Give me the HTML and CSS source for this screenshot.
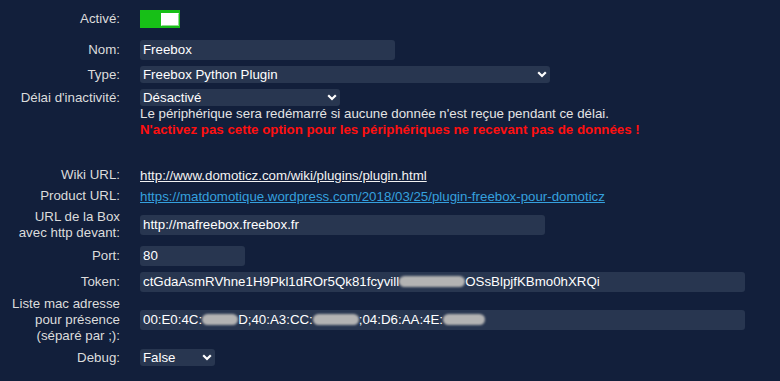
FILE: index.html
```html
<!DOCTYPE html>
<html lang="fr">
<head>
    <meta charset="UTF-8">
    <title>Hardware - Freebox</title>
    <link rel="stylesheet" href="styles.css">
</head>
<body>

<form class="plugin-form">
    <div class="row row-enabled">
        <label>Activé:</label>
        <div><span class="toggle"><span class="knob"></span></span></div>
    </div>
    <div class="row row-wide">
        <label for="name">Nom:</label>
        <div><input type="text" id="name" class="w-name" value="Freebox"></div>
    </div>
    <div class="row row-wide">
        <label for="type">Type:</label>
        <div class="select w-type">
            <select id="type"><option>Freebox Python Plugin</option></select>
            <svg class="chevron" viewBox="0 0 10 7"><path d="M1.2 1.2 5 5 8.8 1.2" fill="none" stroke="#fff" stroke-width="2.2"/></svg>
        </div>
    </div>
    <div class="row row-top">
        <label for="timeout">Délai d'inactivité:</label>
        <div>
            <div class="select w-timeout">
                <select id="timeout"><option>Désactivé</option></select>
                <svg class="chevron" viewBox="0 0 10 7"><path d="M1.2 1.2 5 5 8.8 1.2" fill="none" stroke="#fff" stroke-width="2.2"/></svg>
            </div>
            <p class="help">Le périphérique sera redémarré si aucune donnée n'est reçue pendant ce délai.</p>
            <p class="warning">N'activez pas cette option pour les périphériques ne recevant pas de données !</p>
        </div>
    </div>

    <div class="row row-wiki">
        <label>Wiki URL:</label>
        <div><a class="link-wiki" href="#">http://www.domoticz.com/wiki/plugins/plugin.html</a></div>
    </div>
    <div class="row">
        <label>Product URL:</label>
        <div><a class="link-product" href="#">https://matdomotique.wordpress.com/2018/03/25/plugin-freebox-pour-domoticz</a></div>
    </div>
    <div class="row">
        <label for="address">URL de la Box<br>avec http devant:</label>
        <div><input type="text" id="address" class="w-address" value="http://mafreebox.freebox.fr"></div>
    </div>
    <div class="row row-wide">
        <label for="port">Port:</label>
        <div><input type="text" id="port" class="w-port" value="80"></div>
    </div>
    <div class="row row-tight">
        <label>Token:</label>
        <div class="field w-long">ctGdaAsmRVhne1H9Pkl1dROr5Qk81fcyvill<span class="blur b-token"></span>OSsBlpjfKBmo0hXRQi</div>
    </div>
    <div class="row">
        <label>Liste mac adresse<br>pour présence<br>(séparé par ;):</label>
        <div class="field w-long">00:E0:4C:<span class="blur b-mac1"></span>D;40:A3:CC:<span class="blur b-mac2"></span>;04:D6:AA:4E:<span class="blur b-mac3"></span></div>
    </div>
    <div class="row">
        <label for="debug">Debug:</label>
        <div class="select w-debug">
            <select id="debug"><option>False</option></select>
            <svg class="chevron" viewBox="0 0 10 7"><path d="M1.2 1.2 5 5 8.8 1.2" fill="none" stroke="#fff" stroke-width="2.2"/></svg>
        </div>
    </div>
</form>

</body>
</html>
```

FILE: styles.css
```css
body {
    margin: 0;
    background-color: #121f3b;
    font-family: 'Liberation Sans', Arial, sans-serif;
    font-size: 13.3px;
    color: #dcdcdc;
}
.plugin-form {
    padding-top: 10px;
}
.row {
    display: grid;
    grid-template-columns: 120px 1fr;
    column-gap: 20px;
    align-items: center;
    margin-bottom: 5px;
}
.row label {
    text-align: right;
    line-height: 16px;
}
.row-enabled {
    margin-bottom: 12px;
}
.row-wide {
    margin-bottom: 6px;
}
.row-tight {
    margin-bottom: 4px;
}
.row-top {
    align-items: start;
    margin-bottom: 29px;
}
.row-top label {
    padding-top: 1px;
}
.toggle {
    display: block;
    position: relative;
    width: 40px;
    height: 18px;
    background-color: #17bf17;
}
.knob {
    position: absolute;
    top: 3px;
    left: 21px;
    width: 16px;
    height: 11px;
    background-color: #fff;
    border: 1px solid #8fdc8f;
    border-top-color: #fff;
    border-left-color: #fff;
}
input, .field {
    display: block;
    box-sizing: border-box;
    height: 20px;
    padding: 0 3px;
    border: none;
    border-radius: 3px;
    background-color: #283650;
    color: #fff;
    font-family: inherit;
    font-size: 13.3px;
    line-height: 20px;
    outline: none;
}
.field {
    white-space: nowrap;
    overflow: hidden;
}
.select {
    position: relative;
    height: 17px;
}
.select select {
    appearance: none;
    -webkit-appearance: none;
    width: 100%;
    height: 17px;
    padding: 0 3px;
    border: none;
    border-radius: 3px;
    background-color: #283650;
    color: #fff;
    font-family: inherit;
    font-size: 13.3px;
    outline: none;
}
.chevron {
    position: absolute;
    right: 3px;
    top: 5px;
    width: 10px;
    height: 7px;
    pointer-events: none;
}
.w-name { width: 255px; }
.w-type { width: 410px; }
.w-timeout { width: 200px; }
.w-address { width: 405px; }
.w-port { width: 105px; }
.w-long { width: 605px; }
.w-debug { width: 75px; }
.help, .warning {
    margin: 0;
    line-height: 16px;
}
.help {
    color: #e4e4e4;
}
.warning {
    color: #ff1010;
    font-weight: bold;
}
.link-wiki {
    color: #f2f2f2;
}
.link-product {
    color: #35a0de;
}
.blur {
    display: inline-block;
    height: 11px;
    vertical-align: -1px;
    background-color: #b3b3b3;
    border-radius: 6px;
    filter: blur(1px);
}
.b-token { width: 66px; }
.b-mac1 { width: 36px; }
.b-mac2 { width: 46px; }
.b-mac3 { width: 42px; }
```
